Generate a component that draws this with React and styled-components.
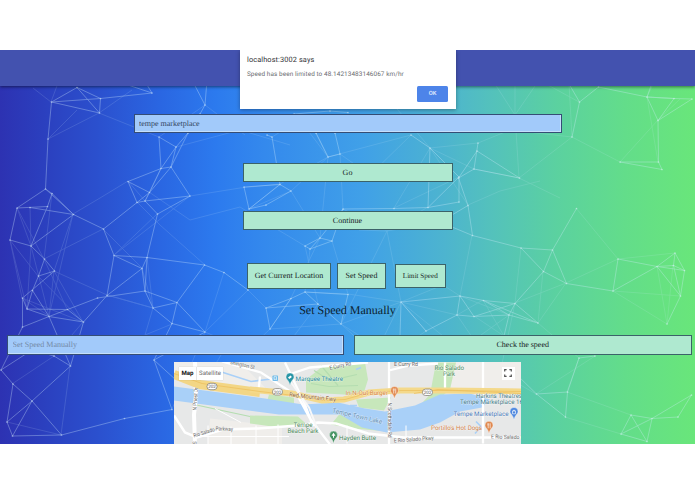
import React from "react";
import styled, { createGlobalStyle } from "styled-components";

const GlobalStyle = createGlobalStyle`
  * { box-sizing: border-box; }
  body { margin: 0; background: #fff; overflow: hidden; text-rendering: geometricPrecision; }
  input, button { text-rendering: inherit; }
`;

const Screen = styled.div`
  height: 494px;
  padding: 50px 0;
  background: #fff;
`;

const Page = styled.main`
  position: relative;
  height: 394px;
  overflow: hidden;
  display: flex;
  flex-direction: column;
  font-family: "Liberation Serif", serif;
  color: #16231f;
  background: linear-gradient(90deg, #2d32b2 0%, #2b3fbe 6%, #2b50ce 14%, #2a66e2 23%, #2c7aee 31%, #3489ed 38%, #40a0e8 52%, #4db4cf 64%, #54c2bb 71%, #5bd1a0 80%, #63dd8a 90%, #69e67a 100%);
`;

const Network = styled.svg`
  position: absolute;
  inset: 0;
`;

const AppBar = styled.header`
  position: relative;
  flex: none;
  height: 36px;
  background: #4352af;
  box-shadow: 0 1px 3px rgba(0, 0, 0, 0.5);
`;

const Content = styled.div`
  position: relative;
  display: flex;
  flex-direction: column;
  align-items: center;
`;

const Field = styled.input`
  display: block;
  width: ${(p) => p.$width}px;
  height: 19.5px;
  margin: ${(p) => p.$margin || "0"};
  padding: 0 4.5px;
  border: 1px solid #354d75;
  border-radius: 0;
  outline: none;
  background: #a2cafa;
  box-shadow: inset -1px -1px 0 #c5dffb;
  color: #34465f;
  font: 8px "Liberation Serif", serif;
  &::placeholder { color: #7389a6; opacity: 1; }
`;

const Button = styled.button`
  width: ${(p) => p.$width}px;
  height: ${(p) => p.$height || 19}px;
  margin: ${(p) => p.$margin || "0"};
  padding: 0;
  border: 1px solid #3b6269;
  border-radius: 0;
  background: #afe9d0;
  color: #17231f;
  font: ${(p) => p.$size || 8}px "Liberation Serif", serif;
  white-space: nowrap;
`;

const ButtonRow = styled.div`
  display: flex;
  align-items: center;
  align-self: flex-start;
  margin: 33px 0 0 247px;
`;

const Heading = styled.h2`
  margin: 13px 0 0;
  font-size: 12px;
  font-weight: 400;
  line-height: 17px;
  color: #0c1d2c;
`;

const SpeedRow = styled.div`
  display: flex;
  align-self: stretch;
  gap: 10px;
  margin: 16px 0 0 7px;
`;

const Dialog = styled.div`
  position: absolute;
  z-index: 2;
  top: 0;
  left: 239.5px;
  width: 216px;
  height: 59px;
  padding: 5px 7.5px;
  display: flex;
  flex-direction: column;
  background: #fff;
  box-shadow: 0 1px 4px rgba(0, 0, 0, 0.35);
  font-family: Roboto, sans-serif;
`;

const DialogTitle = styled.div`
  font-size: 7.35px;
  line-height: 10px;
  letter-spacing: 0.12px;
  color: #303134;
`;

const DialogText = styled.div`
  margin-top: 4px;
  font-size: 6.4px;
  line-height: 10px;
  letter-spacing: 0.08px;
  color: #6c6e72;
  white-space: nowrap;
`;

const ConfirmButton = styled.button`
  align-self: flex-end;
  width: 31px;
  height: 15.5px;
  margin-top: 7px;
  padding: 0;
  border: 0;
  border-radius: 1.5px;
  background: #4d84e9;
  color: #e7effe;
  font: 500 5.8px Roboto, sans-serif;
`;

const MapFrame = styled.div`
  position: relative;
  width: 347px;
  height: 82px;
  margin-top: 7px;
  overflow: hidden;
`;

const MapArt = styled.svg`
  display: block;
  font-family: Roboto, sans-serif;
`;

const MapControls = styled.div`
  position: absolute;
  top: 5px;
  left: 5px;
  display: flex;
  height: 13.5px;
  background: #fff;
  font: 6.1px/14px Roboto, sans-serif;
  box-shadow: 0 0 1px rgba(0, 0, 0, 0.2);
`;

const MapTab = styled.span`
  width: ${(p) => p.$width}px;
  text-align: center;
  font-weight: ${(p) => (p.$active ? 700 : 400)};
  color: ${(p) => (p.$active ? "#111" : "#6c6c6c")};
  border-right: ${(p) => (p.$active ? "0.5px solid #e6e6e6" : "0")};
`;

const Fullscreen = styled.div`
  position: absolute;
  top: 5px;
  right: 6px;
  width: 13.5px;
  height: 13px;
  display: flex;
  align-items: center;
  justify-content: center;
  background: #fff;
`;

const brightLines = [
  "51.5,102 77,87.5 100.5,98.5 99.5,113 51.5,102",
  "77,87.5 99.5,113",
  "100.5,98.5 152,93 125,84",
  "51.5,102 48,139 45.5,189",
  "51.5,102 100.5,98.5",
  "152,93 144,80",
  "205,105 200,114 188,133 176,147 161,168.5 171,167 176,147 159,137 161,168.5 149.5,192.5 128,181.5 161,168.5",
  "188,133 171,167 149.5,192.5 137,202.5 128,181.5",
  "171,167 190,196 157.5,214 145,201 137,202.5 103.5,229",
  "192,80 205,105 207,80",
  "149.5,192.5 145,201 190,196",
  "45.5,189 52,193.5 47.5,206.5 17,208 10,240 31,246 44.5,259 54.5,271 38.5,276 44.5,259",
  "17,208 45.5,189 73.5,214.5 30,207.5",
  "52,193.5 73.5,214.5 103.5,229 114,255.5 147,257.5 157.5,214",
  "47.5,206.5 31,246 73.5,214.5",
  "114,255.5 142,268.5 147,257.5 145,291 142,268.5 107,295.5 114,255.5",
  "38.5,276 32.5,290.5 27,309 22.5,298 54.5,271",
  "22.5,298 22.5,327 49,316.5 67.5,309.5 97.5,298 145,291 177,302.5 153,308 145,291",
  "27,309 49,316.5 32.5,290.5",
  "27,309 67.5,309.5 83.5,322 107,295.5",
  "49,316.5 83.5,322 70.5,366 49,316.5",
  "153,308 172,323.5 205,332 177,302.5 172,323.5 154,360 172,409.5 124.5,418.5 61.5,435",
  "204.5,265 224,272.5 248,290",
  "147,257.5 204.5,265 177,302.5",
  "22.5,327 1,370 13,384 32,401 7,422 12.5,436 61.5,435 32,401 12.5,436",
  "1,370 32,350 54,356 70.5,366 32,401",
  "13,384 7,422",
  "205,332 154,360 188,391",
  "267,135 272,137 280,184.5 291,191 266,205 249,209 244,187 280,184.5 249,209",
  "294,114 330,111 348,112.5",
  "316,133 328,157 340,154 335,133",
  "411,135 430,148 459,177 428,207.5 394,208.5 343,209",
  "430,148 428,207.5 459,202 459,177",
  "305,246 310,249 332,241 320,238 305,246",
  "310,249 320,238 343,209 332,241",
  "305,292 291,298.5 266,308 270,329 291,298.5",
  "305,292 318,304 341,324 348,294.5",
  "305,292 348,294.5",
  "318,304 266,308",
  "401,302 426,331 457,315 460,296 401,302",
  "401,302 400,336",
  "460,296 483.5,300.5 515,303.5 538,323 509,315 483.5,300.5",
  "457,315 474,316.5 509,315 515,303.5 474,316.5 460,296",
  "483.5,300.5 538,323",
  "509,315 504,336",
  "478,143 474,169 458.5,178 477,151 519.5,178 474,169",
  "458.5,178 468,205.5 472.5,235.5 440,222 468,205.5",
  "472.5,235.5 521,248 552.5,250 543.5,271.5 521,248",
  "576.5,208.5 552.5,250 566.5,283.5 543.5,271.5 515,303.5",
  "566.5,283.5 613,291 618,259 657,266.5 675,253 684.5,270.5 657,266.5 673.5,265.5 684.5,270.5",
  "613,291 657,266.5 680.5,296 684.5,270.5",
  "673.5,265.5 680.5,296 667,324",
  "675,253 673.5,265.5",
  "569,84 579.5,102 598.5,87 647,97 674,98.5 692,99 658,120.5 647,97",
  "653,80 647,97 674,98.5 658,120.5",
  "579.5,102 572,137",
  "658,120.5 658.5,162 662,169.5 620,162 658.5,162",
  "515,373 536.5,394 567.5,392 579,358 595,356",
  "536.5,394 565.5,417 567.5,392",
  "621,434 631,415 652,418.5 678,417 691.5,395 652,418.5 621,434 647,441.5 631,415",
  "647,441.5 652,418.5",
];

const distantLines = [
  "48,139 77,110", "48,139 99,113 132,90", "33,88 51,102 58,83",
  "99,113 159,137 205,105 245,135", "128,181 100,198 73,214 54,271",
  "176,147 240,130 290,145", "190,196 240,188 280,184", "137,202 160,225 205,265",
  "10,240 22,298 83,322", "17,208 44,259 67,309", "31,246 49,316 73,214",
  "54,271 107,295 153,308", "103,229 142,268 153,308", "149,192 190,220 240,207 305,246",
  "224,272 205,332 248,290 266,308", "249,209 291,191 320,238 328,157",
  "316,133 328,157 411,135", "328,157 300,120 272,137", "340,154 343,209 387,231 428,207",
  "359,230 387,231 440,222", "310,249 305,292 348,294 332,241", "305,246 318,304 291,340",
  "270,329 248,350 205,332", "341,324 375,355 401,302", "348,294 401,302 457,315",
  "387,231 401,302 443,285 460,296", "426,331 390,355 341,324",
  "411,135 370,175 340,154", "430,148 474,169 519,178 560,198", "519,178 515,115 495,84",
  "515,84 515,115 535,86", "468,205 430,148 478,143 510,130 572,137 620,162",
  "569,84 572,137 519,178", "620,162 658,120 680,99", "658,162 647,97 655,80",
  "472,235 460,296", "521,248 515,303 566,283", "543,271 538,323 566,283 618,259",
  "576,208 618,259 675,253", "613,291 667,324", "657,266 667,324 673,265",
  "613,291 680,296", "515,303 500,373 536,394", "538,323 579,358 567,392",
  "536,394 595,356", "567,392 631,415", "565,417 621,434", "153,308 145,335 172,324",
  "7,422 61,435 70,366", "12,384 54,356 83,322", "172,409 205,332",
  "230,340 215,365", "376,84 430,148", "548,85 579,102", "468,205 500,191 540,181",
  "10,240 38,276 83,322", "10,240 27,309 31,246", "52,193 44,259 103,229", "17,208 31,246 30,207",
  "22,298 49,316 54,271 83,322", "128,181 145,201 161,168", "157,214 114,255 190,196",
  "147,257 153,308 107,295", "249,209 280,184 328,157 291,191", "320,238 291,298 270,329 341,324",
  "401,302 341,324 387,231", "430,148 394,208 459,177", "457,315 483,300 504,336 474,316",
  "460,296 509,315 474,340 457,315", "426,331 401,302 443,336",
];

const dots = [...new Set(brightLines.flatMap((line) => line.split(" ")))];

function Background() {
  return (
    <Network width="695" height="394" viewBox="0 50 695 394" aria-hidden="true">
      <g fill="none" stroke="#d4efff" strokeWidth=".75">
        <g opacity=".18">{distantLines.map((p) => <polyline key={p} points={p} />)}</g>
        <g opacity=".44">{brightLines.map((p) => <polyline key={p} points={p} />)}</g>
      </g>
      <g fill="#e4f6ff" opacity=".5">
        {dots.map((dot) => {
          const [x, y] = dot.split(",");
          return <circle key={dot} cx={x} cy={y} r=".85" />;
        })}
      </g>
    </Network>
  );
}

function Pin({ x, y, color, kind }) {
  return (
    <g transform={`translate(${x} ${y})`}>
      <path d="M0 5.5C-1-.1-4-.3-4-3.1a4 4 0 0 1 8 0C4-.3 1-.1 0 5.5Z" fill={color} stroke="#fff" strokeWidth=".4" />
      {kind === "food" && <path d="M-1.2-5v2.2M-.3-5v2.2M-.8-3v3M1.2-5v5" stroke="#fff" strokeWidth=".65" />}
      {kind === "bag" && <path d="M-1.5-3.5h3V-.7h-3ZM-.8-3.5v-.7h1.6v.7" fill="none" stroke="#fff" strokeWidth=".65" />}
      {kind === "park" && <path d="M0-5.4l2 3H.5v2h-1v-2H-2Z" fill="#fff" />}
      {kind === "ticket" && <path d="m-2-2.6 2.6-2 1.3 1.7-2.6 2Z" fill="#fff" />}
    </g>
  );
}

function Shield({ x, y }) {
  return (
    <g transform={`translate(${x} ${y})`}>
      <rect x="-5" y="-3.2" width="10" height="6.4" rx="3" fill="#fff" stroke="#77736a" strokeWidth=".7" />
      <text y="1.7" textAnchor="middle" fontSize="4.6" fill="#555">202</text>
    </g>
  );
}

function Label({ x, y, width, color = "#666", size = 6.4, rotate = 0, children }) {
  return (
    <text x={x} y={y} textLength={width} lengthAdjust="spacingAndGlyphs" fontSize={size} fill={color} stroke="#fff"
      strokeWidth=".8" strokeOpacity=".55" paintOrder="stroke" transform={`rotate(${rotate} ${x} ${y})`}>
      {children}
    </text>
  );
}

function TempeMap() {
  return (
    <MapFrame>
      <MapArt width="347" height="82" viewBox="174 362.5 347 82">
        <path fill="#e7e8e8" d="M174 362h347v83H174z" />
        <path fill="#f0eeeb" d="M174 362h65l28 28-93-12ZM438 362h83v28h-83ZM210 419l72 8v18H208Z" />
        <path fill="#c7e7bb" d="M306 380q8-6 15-12l44-5 3 17-5 16-57-3ZM269 395l25 3v7l-27-3ZM250 416l48 1 10 9-36 1-22-3ZM356 400l35-2-7 13-25-3ZM436 363h20l-6 27-20 17-14 3 14-15ZM340 414l48 18-35-3-22-4Z" />
        <path fill="none" stroke="#b4ddb0" strokeWidth="1.2" d="m194 405 56 12M314 371l16 10 27-6M311 384l18 3 29-1M321 366l17 20" />
        <path fill="#a9d0f8" d="M174 387 265 399l38 6 35-2 27 6 20 3 30-6 25-11 30-1 20 6-8 8-22 4-20 11-20 7-33 3-25-5-22-13H279L174 401Z" />
        <path fill="none" stroke="#a9d0f8" strokeWidth="1.6" d="m220 372 31 10 24-3M350 406h7M476 422l5 5-6 7M356 370l5-2" />
        <g fill="none" stroke="#fff" strokeWidth="2.3">
          <path d="m195 362 1 34-2 19 1 30" strokeWidth="4" />
          <path d="m174 416 11 17 12 5 26-8 35-1 40-3 20-3 18 1 32 10 36 4h117" strokeWidth="2.5" />
          <path d="m222 362 39 11 37 24 12 22 20 26M285 363l20 42 8 22M260 377l-2 19M286 376l24-8 58-5M389 362v83M389 371l20-5 29-2M483 362v82M445 363v28M521 398l-14-4" />
          <path d="M208 426v19M231 427v18M256 426v19M278 425v20M347 426v18M406 426v18M199 437h90M215 409l26 14" strokeWidth="1" />
        </g>
        <path fill="none" stroke="#f3d685" strokeWidth="9" d="m174 375 26 10 60 8" />
        <path fill="none" stroke="#f4d98b" strokeWidth="6" d="m250 390 42 4 30 7 22-1 25-7 31-2h44l77 1" />
        <path fill="none" stroke="#ecbd59" strokeWidth=".7" d="m174 374 28 10 58 8 34 4 29 5 22-1 25-7 31-2h44l76 1M414 394l24-4 83 4" />
        <path d="m289 380 20 28 9 23" fill="none" stroke="#f8f8f8" strokeWidth="2" />

        <Label x="230" y="364.5" width="25" size="5.5" rotate="12">shington St</Label>
        <Label x="330" y="370.5" width="22" size="5.7" rotate="-13">E Curry Rd</Label>
        <Label x="394" y="366" width="24" size="5.7">E Curry Rd</Label>
        <Label x="196.5" y="411" width="23" size="5.6" rotate="-86">N Priest Dr</Label>
        <Label x="194" y="438" width="22" size="5.6" rotate="-17">Rio Salado</Label>
        <Label x="215.5" y="431" width="17.5" size="5.6" rotate="2">Parkway</Label>
        <Label x="196.5" y="445" width="3" size="5.5" rotate="-86">S</Label>
        <Label x="289" y="397" width="47" size="6" color="#91643b" rotate="6">Red Mountain Fwy</Label>
        <Label x="332" y="413" width="51" size="6.5" color="#648fb3" rotate="13">Tempe Town Lake</Label>
        <Label x="388" y="403" width="35" size="5.5" rotate="90">N Scottsdale Rd</Label>
        <Label x="394" y="443" width="40" size="5.5" rotate="-4">E Rio Salado Pkwy</Label>
        <Label x="491" y="439" width="33" size="5.5" rotate="1">E Rio Salado P</Label>
        <Label x="295.5" y="381.8" width="47.5" color="#278a9c">Marquee Theatre</Label>
        <Label x="345.5" y="395.2" width="42.5" color="#d68542">In-N-Out Burger</Label>
        <Label x="293.5" y="427.2" width="19" color="#4c895a">Tempe</Label>
        <Label x="287.5" y="433.4" width="31" color="#4c895a">Beach Park</Label>
        <Label x="339" y="440" width="37" color="#438657">Hayden Butte</Label>
        <Label x="434.5" y="370" width="29.5" color="#4d8964">Rio Salado</Label>
        <Label x="443" y="376.2" width="12" color="#4d8964">Park</Label>
        <Label x="476" y="398.5" width="46" color="#477d89">Harkins Theatres</Label>
        <Label x="460" y="404.7" width="63" color="#477d89">Tempe Marketplace 16</Label>
        <Label x="453.5" y="416.5" width="55" color="#4d7cba">Tempe Marketplace</Label>
        <Label x="431" y="430" width="51" color="#d28148">Portillo's Hot Dogs</Label>

        <Shield x="212" y="387" /><Shield x="277.5" y="392.3" /><Shield x="427.5" y="392.8" />
        <Pin x="290" y="380.5" color="#2895a6" kind="ticket" />
        <Pin x="394.5" y="394" color="#e28b51" kind="food" />
        <Pin x="333.5" y="438.7" color="#479464" kind="park" />
        <Pin x="514" y="415" color="#4d87df" kind="bag" />
        <Pin x="489" y="428.8" color="#df874d" kind="food" />
        <rect x="272.5" y="376" width="5.5" height="5.5" rx=".7" fill="#70bce9" />
        <path d="M274 377.2h2.5v2.5H274Zm.4 2.5-.5 1m2.3-1 .5 1" fill="none" stroke="#fff" strokeWidth=".6" />
      </MapArt>
      <MapControls><MapTab $active $width={18}>Map</MapTab><MapTab $width={26}>Satellite</MapTab></MapControls>
      <Fullscreen aria-label="Fullscreen">
        <svg width="8" height="8" viewBox="0 0 8 8"><path d="M.7 2.6V.7h1.9M5.4.7h1.9v1.9M7.3 5.4v1.9H5.4M2.6 7.3H.7V5.4" fill="none" stroke="#555" strokeWidth="1.2" /></svg>
      </Fullscreen>
    </MapFrame>
  );
}

export default function App() {
  return (
    <Screen>
      <GlobalStyle />
      <Page>
        <Background />
        <AppBar />
        <Content>
          <Field aria-label="Destination" $width={428} $margin="27.5px 0 0" defaultValue="tempe marketplace" />
          <Button $width={210} $margin="29.5px 0 0">Go</Button>
          <Button $width={210} $margin="29px 0 0">Continue</Button>
          <ButtonRow>
            <Button $width={84} $height={26.5}>Get Current Location</Button>
            <Button $width={49} $height={26.5} $margin="0 9px 0 6px">Set Speed</Button>
            <Button $width={50.5} $height={24} $size={7.1}>Limit Speed</Button>
          </ButtonRow>
          <Heading>Set Speed Manually</Heading>
          <SpeedRow>
            <Field aria-label="Set Speed Manually" $width={337} placeholder="Set Speed Manually" />
            <Button $width={337.5} $height={19.5}>Check the speed</Button>
          </SpeedRow>
          <TempeMap />
        </Content>
        <Dialog role="dialog">
          <DialogTitle>localhost:3002 says</DialogTitle>
          <DialogText>Speed has been limited to 48.14213483146067 km/hr</DialogText>
          <ConfirmButton>OK</ConfirmButton>
        </Dialog>
      </Page>
    </Screen>
  );
}
